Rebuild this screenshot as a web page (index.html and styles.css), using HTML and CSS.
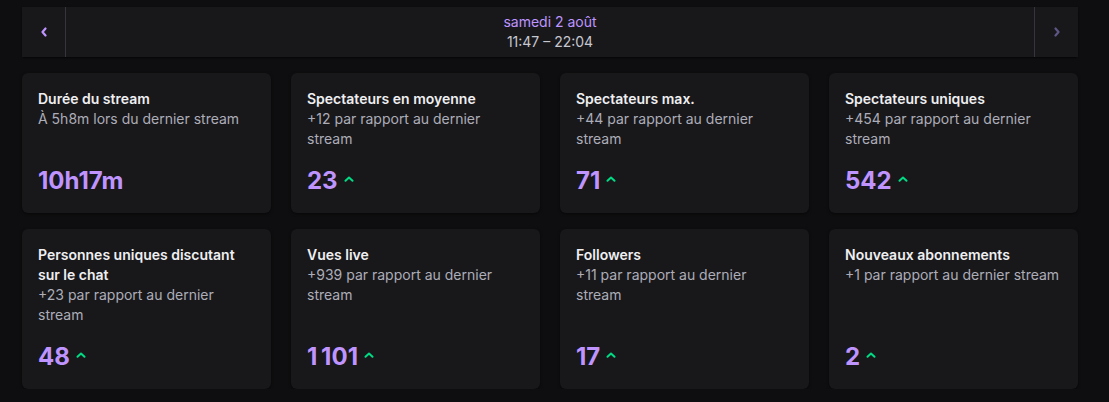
FILE: index.html
```html
<!DOCTYPE html>
<html lang="fr">
<head>
<meta charset="utf-8">
<link rel="stylesheet" href="styles.css">
</head>
<body>
<div class="page">
  <div class="datebar">
    <button class="nav">
      <svg width="8" height="10" viewBox="0 0 8 10"><path d="M5.5 1.5 L2.5 5 L5.5 8.5" fill="none" stroke="currentColor" stroke-width="2.2" stroke-linecap="round" stroke-linejoin="round"/></svg>
    </button>
    <div class="date">
      <div class="day">samedi 2 août</div>
      <div class="hours">11:47 – 22:04</div>
    </div>
    <button class="nav disabled">
      <svg width="8" height="10" viewBox="0 0 8 10"><path d="M2.5 1.5 L5.5 5 L2.5 8.5" fill="none" stroke="currentColor" stroke-width="2.2" stroke-linecap="round" stroke-linejoin="round"/></svg>
    </button>
  </div>

  <div class="grid">
    <div class="card">
      <div class="text">
        <div class="title">Durée du stream</div>
        <div class="sub">À 5h8m lors du dernier stream</div>
      </div>
      <div class="value">10h17m</div>
    </div>
    <div class="card">
      <div class="text">
        <div class="title">Spectateurs en moyenne</div>
        <div class="sub">+12 par rapport au dernier stream</div>
      </div>
      <div class="value">23<svg class="up" width="10" height="6" viewBox="0 0 10 6"><path d="M1.5 4.8 L5 1.5 L8.5 4.8" fill="none" stroke="currentColor" stroke-width="2" stroke-linecap="round" stroke-linejoin="round"/></svg></div>
    </div>
    <div class="card">
      <div class="text">
        <div class="title">Spectateurs max.</div>
        <div class="sub">+44 par rapport au dernier stream</div>
      </div>
      <div class="value">71<svg class="up" width="10" height="6" viewBox="0 0 10 6"><path d="M1.5 4.8 L5 1.5 L8.5 4.8" fill="none" stroke="currentColor" stroke-width="2" stroke-linecap="round" stroke-linejoin="round"/></svg></div>
    </div>
    <div class="card">
      <div class="text">
        <div class="title">Spectateurs uniques</div>
        <div class="sub">+454 par rapport au dernier stream</div>
      </div>
      <div class="value">542<svg class="up" width="10" height="6" viewBox="0 0 10 6"><path d="M1.5 4.8 L5 1.5 L8.5 4.8" fill="none" stroke="currentColor" stroke-width="2" stroke-linecap="round" stroke-linejoin="round"/></svg></div>
    </div>

    <div class="card">
      <div class="text">
        <div class="title">Personnes uniques discutant sur le chat</div>
        <div class="sub">+23 par rapport au dernier stream</div>
      </div>
      <div class="value">48<svg class="up" width="10" height="6" viewBox="0 0 10 6"><path d="M1.5 4.8 L5 1.5 L8.5 4.8" fill="none" stroke="currentColor" stroke-width="2" stroke-linecap="round" stroke-linejoin="round"/></svg></div>
    </div>
    <div class="card">
      <div class="text">
        <div class="title">Vues live</div>
        <div class="sub">+939 par rapport au dernier stream</div>
      </div>
      <div class="value">1&#8239;101<svg class="up" width="10" height="6" viewBox="0 0 10 6"><path d="M1.5 4.8 L5 1.5 L8.5 4.8" fill="none" stroke="currentColor" stroke-width="2" stroke-linecap="round" stroke-linejoin="round"/></svg></div>
    </div>
    <div class="card">
      <div class="text">
        <div class="title">Followers</div>
        <div class="sub">+11 par rapport au dernier stream</div>
      </div>
      <div class="value">17<svg class="up" width="10" height="6" viewBox="0 0 10 6"><path d="M1.5 4.8 L5 1.5 L8.5 4.8" fill="none" stroke="currentColor" stroke-width="2" stroke-linecap="round" stroke-linejoin="round"/></svg></div>
    </div>
    <div class="card">
      <div class="text">
        <div class="title">Nouveaux abonnements</div>
        <div class="sub">+1 par rapport au dernier stream</div>
      </div>
      <div class="value">2<svg class="up" width="10" height="6" viewBox="0 0 10 6"><path d="M1.5 4.8 L5 1.5 L8.5 4.8" fill="none" stroke="currentColor" stroke-width="2" stroke-linecap="round" stroke-linejoin="round"/></svg></div>
    </div>
  </div>
</div>
</body>
</html>
```

FILE: styles.css
```css
* { box-sizing: border-box; }
html, body { margin: 0; background: #0e0e10; }
body {
  font-family: Inter, "Noto Sans", "Liberation Sans", sans-serif;
  font-size: 14px;
  line-height: 20px;
  color: #efeff1;
}
.page {
  padding: 7px 31px 0 22px;
}
.datebar {
  display: flex;
  height: 50px;
  background: #18181b;
  border-radius: 2px;
  box-shadow: 0 1px 2px rgba(0,0,0,0.6);
}
.nav {
  width: 44px;
  flex: none;
  border: none;
  background: #18181b;
  color: #bf94ff;
  display: flex;
  align-items: center;
  justify-content: center;
  padding: 0;
}
.nav:first-child { border-right: 1px solid #35353b; }
.nav:last-child { border-left: 1px solid #35353b; }
.nav.disabled { color: #5e5684; }
.date {
  flex: 1;
  display: flex;
  flex-direction: column;
  align-items: center;
  justify-content: center;
}
.day { color: #bf94ff; }
.hours { color: #c7c7cf; }
.grid {
  margin-top: 16px;
  display: grid;
  grid-template-columns: repeat(4, 1fr);
  column-gap: 20px;
  row-gap: 16px;
}
.card {
  background: #18181b;
  border-radius: 6px;
  padding: 16px;
  display: flex;
  flex-direction: column;
  justify-content: space-between;
  box-shadow: 0 1px 3px rgba(0,0,0,0.5);
}
.text { min-height: 60px; margin-bottom: 16px; }
.title { font-weight: 600; color: #efeff1; }
.sub { color: #adadb8; }
.value {
  font-size: 24px;
  line-height: 32px;
  font-weight: 700;
  color: #bf94ff;
  display: flex;
  align-items: center;
}
.up { color: #00db84; margin-left: 6px; margin-top: -4px; }
```
